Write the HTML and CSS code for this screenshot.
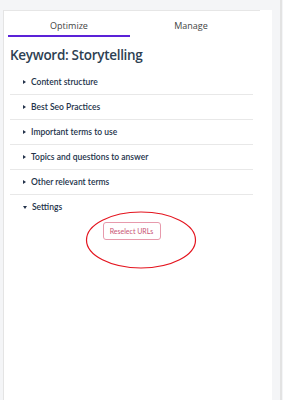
FILE: index.html
```html
<!DOCTYPE html>
<html lang="en">
<head>
    <meta charset="UTF-8">
    <meta name="viewport" content="width=device-width, initial-scale=1.0">
    <title>Optimize</title>
    <link rel="stylesheet" href="styles.css">
</head>
<body>
    <div class="layout">
        <div class="panel">
            <div class="panel-top">
                <div class="tabs">
                    <div class="tab active">Optimize</div>
                    <div class="tab">Manage</div>
                </div>
            </div>
            <h1 class="keyword">Keyword: Storytelling</h1>
            <div class="sections">
                <div class="section">
                    <div class="section-head"><span class="caret"></span>Content structure</div>
                </div>
                <div class="section">
                    <div class="section-head"><span class="caret"></span>Best Seo Practices</div>
                </div>
                <div class="section">
                    <div class="section-head"><span class="caret"></span>Important terms to use</div>
                </div>
                <div class="section">
                    <div class="section-head"><span class="caret"></span>Topics and questions to answer</div>
                </div>
                <div class="section">
                    <div class="section-head"><span class="caret"></span>Other relevant terms</div>
                </div>
                <div class="section open">
                    <div class="section-head"><span class="caret"></span>Settings</div>
                    <div class="section-body">
                        <button class="reselect">Reselect URLs</button>
                    </div>
                </div>
            </div>
            <!-- annotation circle drawn over the button -->
            <svg class="annotation" width="112" height="60" viewBox="0 0 112 60">
                <ellipse cx="56" cy="30" rx="54.5" ry="28" fill="none" stroke="#e4141e" stroke-width="1.2"/>
            </svg>
        </div>
        <div class="rail"></div>
    </div>
</body>
</html>
```

FILE: styles.css
```css
body {
    margin: 0;
    background-color: #f4f5f7;
    font-family: Lato, "Open Sans", sans-serif;
}
.layout {
    display: flex;
    height: 400px;
}
.panel {
    position: relative;
    width: 268px;
    margin-top: 10px;
    margin-left: 3px;
    background-color: #fff;
    border-left: 1px solid #e4e4e4;
}
.panel-top {
    width: 256px;
    border-top: 1px solid #e6e6e6;
}
.tabs {
    display: flex;
    width: 244px;
    margin-left: 4px;
}
.tab {
    flex: 1;
    text-align: center;
    font-family: "Open Sans", sans-serif;
    font-size: 9px;
    line-height: 12px;
    color: #444;
    padding: 9px 0 3px;
    border-bottom: 2px solid transparent;
}
.tab.active {
    border-bottom-color: #5b22d8;
}
.keyword {
    margin: 0 0 0 6px;
    padding-top: 4px;
    font-family: "Open Sans", sans-serif;
    font-weight: 600;
    font-size: 13.5px;
    letter-spacing: -0.3px;
    line-height: 29px;
    color: #2e3f52;
}
.sections {
    margin: 0 19px 0 6px;
}
.section {
    border-bottom: 1px solid #e8e8e8;
}
.section.open {
    border-bottom: none;
}
.section-head {
    display: flex;
    align-items: center;
    height: 24px;
    padding-left: 13px;
    font-size: 8.5px;
    font-weight: 600;
    color: #23324a;
}
.caret {
    width: 0;
    height: 0;
    margin-right: 5px;
    border-top: 2.5px solid transparent;
    border-bottom: 2.5px solid transparent;
    border-left: 3px solid #23324a;
}
.open .caret {
    border-left: 2.5px solid transparent;
    border-right: 2.5px solid transparent;
    border-top: 3px solid #23324a;
    border-bottom: none;
}
.section-body {
    display: flex;
    justify-content: center;
    padding-top: 3px;
}
.reselect {
    width: 58px;
    height: 18px;
    padding: 0;
    background-color: #fff;
    border: 1px solid #e79aac;
    border-radius: 3px;
    font-family: Lato, sans-serif;
    font-size: 7px;
    color: #c95474;
    cursor: pointer;
}
.annotation {
    position: absolute;
    left: 81px;
    top: 200px;
}
.rail {
    width: 2px;
    margin-left: 8px;
    background-color: #e3e3e3;
}
```
